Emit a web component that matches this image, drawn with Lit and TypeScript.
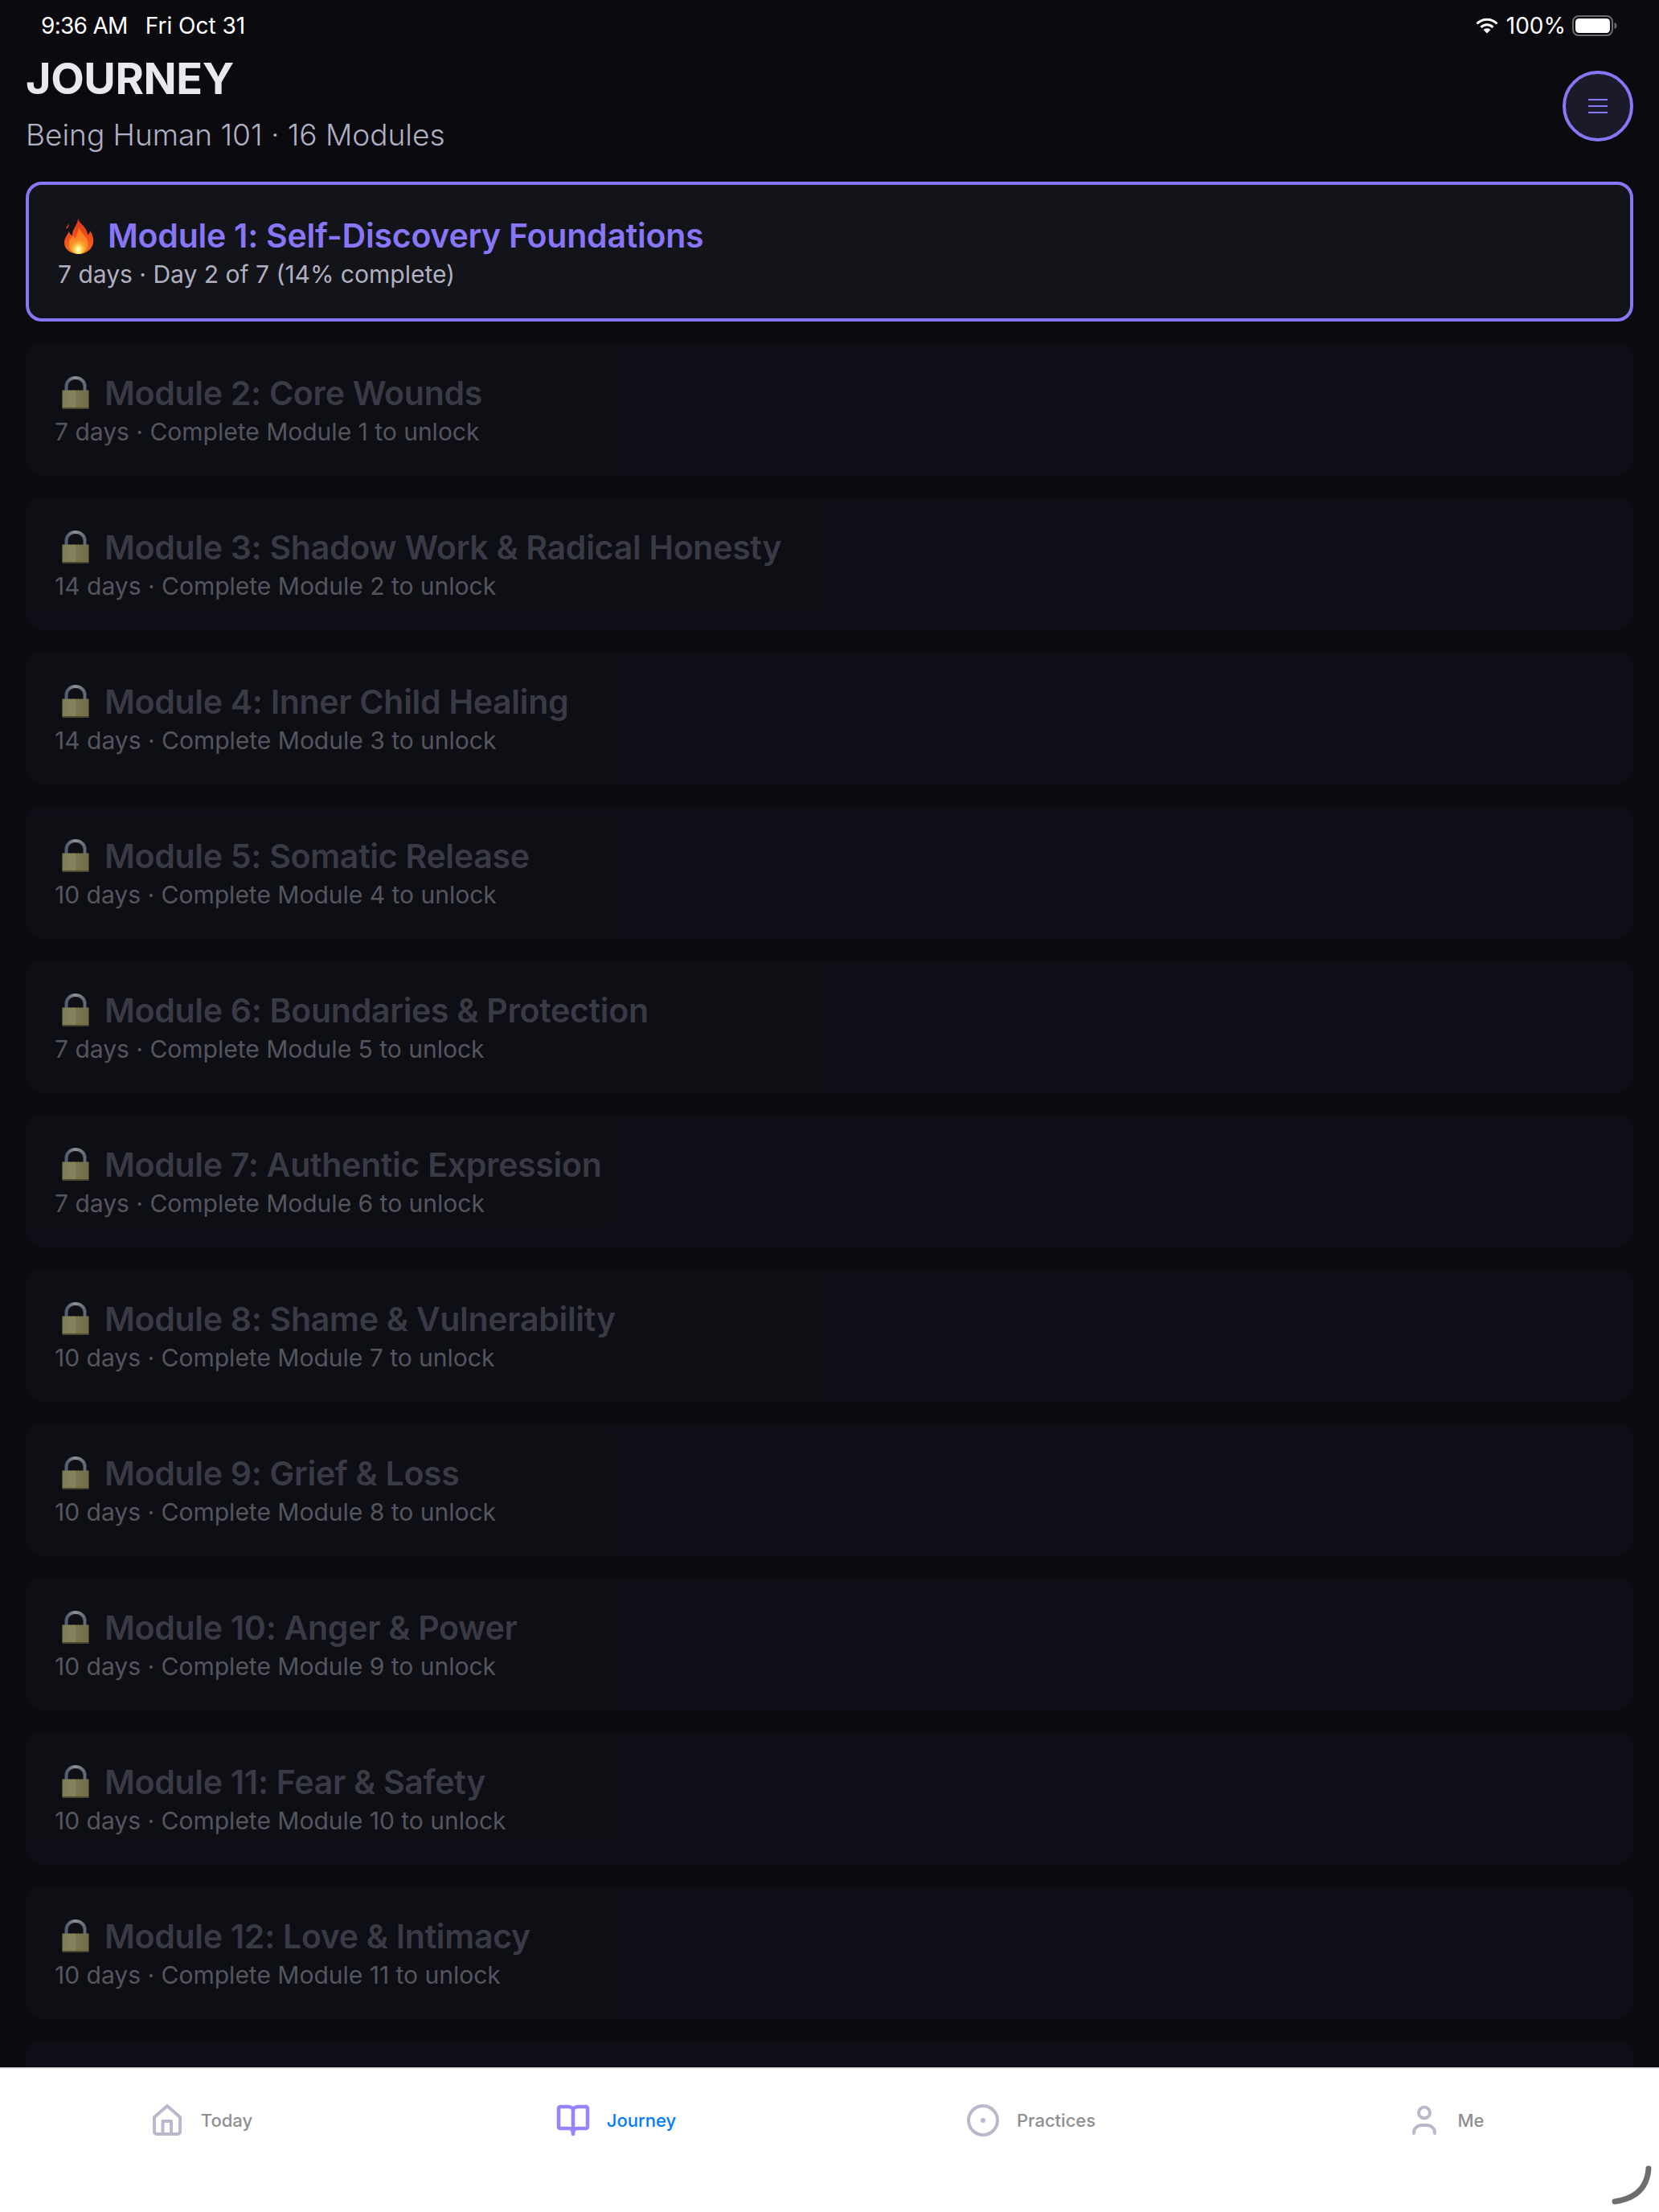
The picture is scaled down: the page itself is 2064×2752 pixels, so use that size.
import { LitElement, html, css, svg } from 'lit';
import { customElement } from 'lit/decorators.js';

const MODULES = [
  { title: 'Module 2: Core Wounds', days: 7 },
  { title: 'Module 3: Shadow Work & Radical Honesty', days: 14 },
  { title: 'Module 4: Inner Child Healing', days: 14 },
  { title: 'Module 5: Somatic Release', days: 10 },
  { title: 'Module 6: Boundaries & Protection', days: 7 },
  { title: 'Module 7: Authentic Expression', days: 7 },
  { title: 'Module 8: Shame & Vulnerability', days: 10 },
  { title: 'Module 9: Grief & Loss', days: 10 },
  { title: 'Module 10: Anger & Power', days: 10 },
  { title: 'Module 11: Fear & Safety', days: 10 },
  { title: 'Module 12: Love & Intimacy', days: 10 },
];

// tab icons, all on a 48 box
const homeIcon = svg`<path d="M8 20 24 6l16 14v18a3 3 0 0 1-3 3H11a3 3 0 0 1-3-3z"/><path d="M18.500 41V25h10.500v16"/>`;
const bookIcon = svg`<path d="M24 12c0-3-3-5-6-5H8a2 2 0 0 0-2 2v23a2 2 0 0 0 2 2h11c3 0 5 2 5 7 0-5 2-7 5-7h11a2 2 0 0 0 2-2V9a2 2 0 0 0-2-2H30c-3 0-6 2-6 5v28"/>`;
const circleIcon = svg`<circle cx="24" cy="24" r="18"/><circle class="dot" cx="24" cy="24" r="3"/>`;
const userIcon = svg`<circle cx="24" cy="14.500" r="7"/><path d="M11 40v-1a10 9 0 0 1 10-9h6a10 9 0 0 1 10 9v1"/>`;

const TABS = [
  { label: 'Today', icon: homeIcon },
  { label: 'Journey', icon: bookIcon, active: true },
  { label: 'Practices', icon: circleIcon },
  { label: 'Me', icon: userIcon },
];

@customElement('app-root')
export class AppRoot extends LitElement {
  static styles = css`
    :host {
      display: block;
      height: 2752px;
      overflow: hidden;
      position: relative;
      background: #0a0a0f;
      font-family: Inter, 'Liberation Sans', sans-serif;
    }

    .page {
      display: flex;
      flex-direction: column;
      height: 2752px;
    }

    .status {
      height: 64px;
      flex: none;
      display: flex;
      align-items: center;
      justify-content: space-between;
      padding: 0 52px 0 51px;
      color: #fff;
      font-size: 28px;
      box-sizing: border-box;
    }

    .status-left {
      display: flex;
      gap: 22px;
    }

    .time {
      letter-spacing: -0.7px;
    }

    .status-right {
      display: flex;
      align-items: center;
      gap: 8px;
    }

    .wifi {
      margin-right: 2px;
    }

    .header {
      flex: none;
      display: flex;
      align-items: center;
      justify-content: space-between;
      padding: 0 32px 8px;
      height: 136px;
      box-sizing: border-box;
    }

    .title {
      margin: 0;
      font-size: 54px;
      line-height: 68px;
      font-weight: 700;
      letter-spacing: -0.4px;
      color: #e8e8f0;
    }

    .subtitle {
      margin: 12px 0 0;
      font-size: 37px;
      line-height: 48px;
      font-weight: 300;
      color: #b0b0c4;
    }

    .menu {
      width: 88px;
      height: 88px;
      margin-top: 8px;
      box-sizing: border-box;
      border: 4px solid #8777f6;
      border-radius: 50%;
      background: #1a1a28;
      display: flex;
      align-items: center;
      justify-content: center;
    }

    .list {
      flex: 1;
      min-height: 0;
      overflow: hidden;
      display: flex;
      flex-direction: column;
      gap: 26px;
      padding: 26px 32px 0;
    }

    .card {
      flex: none;
      border-radius: 20px;
      background: #13131a;
      padding: 36px 36px 0;
      height: 166px;
      box-sizing: border-box;
    }

    .card.current {
      height: 174px;
      border: 4px solid #8777f6;
    }

    .card.locked {
      background: #11111a;
      opacity: 0.6;
    }

    .card-title {
      display: flex;
      align-items: center;
      gap: 19px;
      font-size: 41px;
      line-height: 54px;
      font-weight: 600;
      letter-spacing: -0.28px;
      color: #5a5a69;
    }

    .current .card-title {
      color: #8777f6;
      gap: 15px;
      letter-spacing: -0.24px;
    }

    .card-sub {
      margin-top: -1px;
      font-size: 30px;
      line-height: 44px;
      color: #878794;
    }

    .current .card-sub {
      color: #b0b0c0;
    }

    .flame {
      flex: none;
      margin-left: 7px;
    }

    .lock {
      flex: none;
      margin-left: 9px;
      margin-top: -2px;
    }

    .tabs {
      flex: none;
      height: 180px;
      box-sizing: border-box;
      background: #fff;
      border-top: 2px solid #e0e0e4;
      display: grid;
      grid-template-columns: repeat(4, 1fr);
      padding-top: 40px;
      align-items: start;
    }

    .tab {
      display: flex;
      align-items: center;
      justify-content: center;
      gap: 18px;
      padding-right: 18px;
      font-size: 22px;
      font-weight: 500;
      color: #8e8e93;
    }

    .tab svg {
      width: 48px;
      height: 48px;
      fill: none;
      stroke: #bcb8cc;
      stroke-width: 4;
      stroke-linecap: round;
      stroke-linejoin: round;
    }

    .tab .dot {
      fill: #bcb8cc;
      stroke: none;
    }

    .tab.active {
      color: #007aff;
    }

    .tab.active svg {
      stroke: #9685fa;
      stroke-width: 4.500;
    }

    .home-bar {
      position: absolute;
      right: 8px;
      bottom: 8px;
    }
  `;

  private flame() {
    return html`<svg class="flame" width="40" height="46" viewBox="0 0 40 46">
      <defs>
        <linearGradient id="fl" x1="0" y1="0" x2="0" y2="1">
          <stop offset="0" stop-color="#d8361a" />
          <stop offset="0.6" stop-color="#f0501c" />
          <stop offset="1" stop-color="#f0701e" />
        </linearGradient>
        <linearGradient id="fm" x1="0" y1="0" x2="0" y2="1">
          <stop offset="0" stop-color="#f7701e" />
          <stop offset="1" stop-color="#fca02a" />
        </linearGradient>
        <radialGradient id="fc" cx="0.5" cy="0.78" r="0.55">
          <stop offset="0" stop-color="#fffde8" />
          <stop offset="0.35" stop-color="#ffe566" />
          <stop offset="1" stop-color="#fba02a" stop-opacity="0" />
        </radialGradient>
      </defs>
      <path fill="url(#fl)" d="M18 0c0 6 6 9 9 14 2 3 3 6 3 8 2-1 3-3 3-5 3 4 5 10 4 15-1 8-9 14-18 14C9 46 1 40 1 32c0-6 4-10 6-14 1 3 2 4 4 5-1-8 8-14 7-23z" />
      <path fill="#d8361a" d="M6 8c0 3-3 4-3 7 2-1 5-3 3-7z" />
      <path fill="url(#fm)" d="M19 12c1 6 9 11 11 18 2 8-4 16-11 16-8 0-14-7-12-15 1-4 3-5 5-8 1 2 2 3 3 4 1-5 4-9 4-15z" />
      <path fill="url(#fc)" d="M19 22c1 4 8 8 9 13 1 6-4 11-9 11s-11-5-10-11c1-4 3-5 5-7 0 1 1 2 2 2 1-2 3-4 3-8z" />
    </svg>`;
  }

  private lock() {
    return html`<svg class="lock" width="34" height="41" viewBox="0 0 34 41">
      <defs>
        <linearGradient id="sh" x1="0" y1="0" x2="1" y2="0">
          <stop offset="0" stop-color="#7d93b5" />
          <stop offset="0.5" stop-color="#e8ecf2" />
          <stop offset="1" stop-color="#9aa4b8" />
        </linearGradient>
        <linearGradient id="bd" x1="0" y1="0" x2="1" y2="0">
          <stop offset="0" stop-color="#d0cb86" />
          <stop offset="0.5" stop-color="#d8d390" />
          <stop offset="0.52" stop-color="#c6c07c" />
          <stop offset="1" stop-color="#b4ae6c" />
        </linearGradient>
      </defs>
      <path fill="none" stroke="url(#sh)" stroke-width="4" d="M5.500 19v-7a11.500 10 0 0 1 23 0v7" />
      <rect x="0.500" y="17.500" width="33" height="23" fill="url(#bd)" />
      <rect x="0.500" y="39" width="33" height="1.500" fill="#7a7440" />
    </svg>`;
  }

  private wifi() {
    return html`<svg class="wifi" width="28" height="20" viewBox="0 0 28 20" fill="none" stroke="#fff" stroke-width="3">
      <path d="M1.500 7.500a17.500 17.500 0 0 1 25 0" />
      <path d="M6.500 12a10.500 10.500 0 0 1 15 0" />
      <path d="M14 19.500 9.500 15a6.500 6.500 0 0 1 9 0z" fill="#fff" stroke="none" />
    </svg>`;
  }

  private battery() {
    return html`<svg width="56" height="26" viewBox="0 0 56 26">
      <rect x="1" y="1" width="49" height="24" rx="7" fill="none" stroke="#6b6b70" stroke-width="2" />
      <rect x="4" y="4" width="43" height="18" rx="4.500" fill="#fff" />
      <path d="M52.500 9c2 .3 3 2 3 4s-1 3.700-3 4z" fill="#6b6b70" />
    </svg>`;
  }

  render() {
    return html`
      <div class="page">
        <div class="status">
          <div class="status-left"><span class="time">9:36 AM</span><span>Fri Oct 31</span></div>
          <div class="status-right">${this.wifi()}<span>100%</span>${this.battery()}</div>
        </div>

        <header class="header">
          <div>
            <h1 class="title">JOURNEY</h1>
            <p class="subtitle">Being Human 101 · 16 Modules</p>
          </div>
          <div class="menu">
            <svg width="24" height="20" viewBox="0 0 24 20" stroke="#8777f6" stroke-width="2">
              <path d="M0 2h24M0 10h24M0 18h24" />
            </svg>
          </div>
        </header>

        <div class="list">
          <div class="card current">
            <div class="card-title">${this.flame()}<span>Module 1: Self-Discovery Foundations</span></div>
            <div class="card-sub">7 days · Day 2 of 7 (14% complete)</div>
          </div>
          ${MODULES.map(
            (m, i) => html`
              <div class="card locked">
                <div class="card-title">${this.lock()}<span>${m.title}</span></div>
                <div class="card-sub">${m.days} days · Complete Module ${i + 1} to unlock</div>
              </div>
            `
          )}
          <div class="card locked"></div>
        </div>

        <nav class="tabs">
          ${TABS.map(
            t => html`
              <div class="tab ${t.active ? 'active' : ''}">
                <svg viewBox="0 0 48 48">${t.icon}</svg>
                <span>${t.label}</span>
              </div>
            `
          )}
        </nav>
      </div>

      <svg class="home-bar" width="52" height="50" viewBox="0 0 52 50">
        <path d="M47 4c-1 14-7 36-42 41" fill="none" stroke="#6e6e70" stroke-width="7" stroke-linecap="round" />
      </svg>
    `;
  }
}
